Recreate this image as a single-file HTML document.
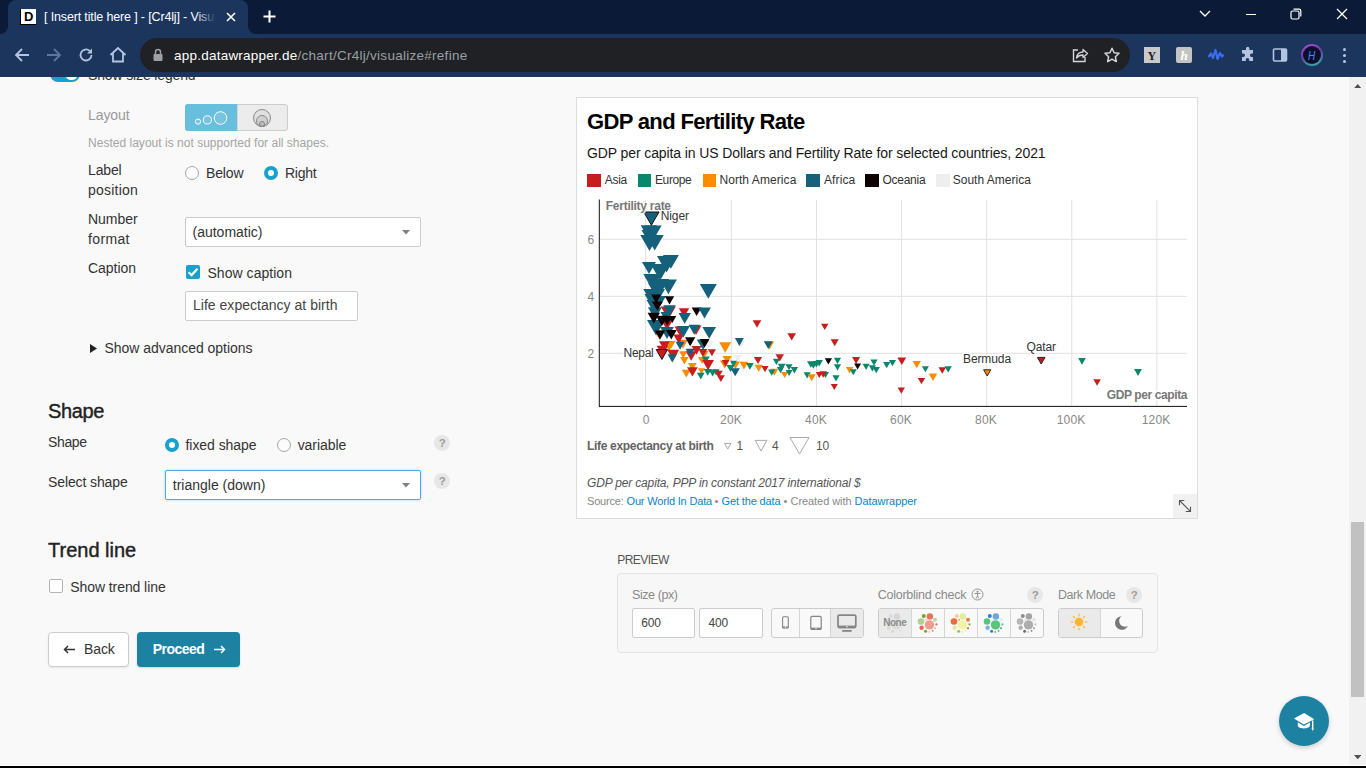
<!DOCTYPE html><html><head><meta charset='utf-8'><title>[ Insert title here ] - [Cr4lj] - Visualize</title><style>
*{box-sizing:border-box;margin:0;padding:0}
html,body{width:1366px;height:768px;overflow:hidden;background:#f9f9f9;font-family:"Liberation Sans",sans-serif;}
.t{position:absolute;white-space:nowrap;display:block}
.b{position:absolute;display:block}
#chrome{z-index:5;position:absolute;left:0;top:0;width:1366px;height:77px;background:#1b355d;overflow:hidden}
#tabbar{position:absolute;left:0;top:0;width:1366px;height:34px;background:#0b1a36}
#page{position:absolute;left:0;top:76px;width:1349px;height:689px;background:#f9f9f9;overflow:hidden}
#sb{position:absolute;left:1349px;top:76px;width:17px;height:689px;background:#f1f1f1}
#bot{position:absolute;left:0;top:765px;width:1366px;height:3px;background:#000;border-top:1px solid #fff}
.inp{position:absolute;background:#fff;border:1px solid #ccc;border-radius:2px}
.grp{position:absolute;border:1px solid #ccc;border-radius:3px;background:#f9f9f9;overflow:hidden}
.help{position:absolute;width:16px;height:16px;border-radius:50%;background:#e7e7e7}
</style></head><body><div id="chrome"><div id="tabbar"></div><div class="b" style="left:8px;top:0;width:240px;height:34px;background:#1b355d;border-radius:8px 8px 0 0"></div><div class="b" style="left:0;top:26px;width:8px;height:8px;background:#1b355d"></div><div class="b" style="left:-8px;top:18px;width:16px;height:16px;border-radius:50%;background:#0b1a36"></div><div class="b" style="left:248px;top:26px;width:8px;height:8px;background:#1b355d"></div><div class="b" style="left:248px;top:18px;width:16px;height:16px;border-radius:50%;background:#0b1a36"></div><div class="b" style="left:20px;top:9px;width:16px;height:16px;background:#fff;border-left:1px solid #000;border-bottom:1px solid #000"></div><span class="t" style="left:24.1px;top:9px;font-size:13px;line-height:15px;color:#000;font-weight:700;">D</span><span class="t" style="left:44.0px;top:10px;font-size:12.5px;line-height:14px;color:#fff;overflow:hidden;letter-spacing:-0.146px;">[ Insert title here ] - [Cr4lj] - Visu</span><div class="b" style="left:196px;top:6px;width:22px;height:22px;background:linear-gradient(90deg,rgba(28,52,89,0),#1b355d 90%)"></div><svg class="b" style="left:225px;top:11px" width="12" height="12" viewBox="0 0 12 12"><path d="M2 2L10 10M10 2L2 10" stroke="#fff" stroke-width="1.6"/></svg><svg class="b" style="left:262px;top:9px" width="15" height="15" viewBox="0 0 15 15"><path d="M7.5 1.5V13.5M1.5 7.5H13.5" stroke="#fff" stroke-width="2"/></svg><svg class="b" style="left:1198px;top:9px" width="14" height="10" viewBox="0 0 14 10"><path d="M2 2L7 7L12 2" stroke="#fff" stroke-width="1.4" fill="none"/></svg><div class="b" style="left:1246px;top:14px;width:10px;height:1px;background:#fff"></div><svg class="b" style="left:1290px;top:8px" width="12" height="12" viewBox="0 0 12 12"><rect x="1" y="3" width="8" height="8" rx="1.5" stroke="#fff" fill="none" stroke-width="1.2"/><path d="M3.5 1.2H9a1.8 1.8 0 0 1 1.8 1.8V8.5" stroke="#fff" fill="none" stroke-width="1.2"/></svg><svg class="b" style="left:1336px;top:8px" width="12" height="12" viewBox="0 0 12 12"><path d="M1 1L11 11M11 1L1 11" stroke="#fff" stroke-width="1.3"/></svg><svg class="b" style="left:13px;top:46px" width="18" height="18" viewBox="0 0 18 18"><path d="M16 9H3M9 3L3 9L9 15" stroke="#b4c3e0" stroke-width="1.8" fill="none"/></svg><svg class="b" style="left:45px;top:46px" width="18" height="18" viewBox="0 0 18 18"><path d="M2 9H15M9 3L15 9L9 15" stroke="#5f769d" stroke-width="1.8" fill="none"/></svg><svg class="b" style="left:77px;top:46px" width="18" height="18" viewBox="0 0 18 18"><path d="M14.5 9a5.5 5.5 0 1 1-1.8-4.1" stroke="#b4c3e0" stroke-width="1.8" fill="none"/><path d="M15 2.5V7.5H10z" fill="#b4c3e0"/></svg><svg class="b" style="left:108px;top:45px" width="20" height="20" viewBox="0 0 20 20"><path d="M2.5 10L10 3L17.5 10M5 8.5V16.5H15V8.5" stroke="#b4c3e0" stroke-width="1.8" fill="none"/></svg><div class="b" style="left:140px;top:38px;width:990px;height:34px;border-radius:17px;background:#202124"></div><svg class="b" style="left:152px;top:48px" width="12" height="14" viewBox="0 0 12 14"><rect x="1.5" y="6" width="9" height="7" rx="1" fill="#9aa0a6"/><path d="M3.5 6V4a2.5 2.5 0 0 1 5 0V6" stroke="#9aa0a6" stroke-width="1.5" fill="none"/></svg><span class="t" style="left:174.0px;top:48px;font-size:13.5px;line-height:15px;color:#fff;letter-spacing:0.230px;">app.datawrapper.de</span><span class="t" style="left:297.5px;top:48px;font-size:13.5px;line-height:15px;color:#9aa0a6;letter-spacing:0.273px;">/chart/Cr4lj/visualize#refine</span><svg class="b" style="left:1071px;top:46px" width="18" height="18" viewBox="0 0 18 18"><path d="M7 4H2.5V15.5H14V11" stroke="#d3d6dc" stroke-width="1.4" fill="none"/><path d="M5.5 12c.5-4 3-6 6.500-6V3.500l4.500 4L12 11.500V9c-3 0-5 1-6.500 3z" stroke="#d3d6dc" stroke-width="1.3" fill="none" stroke-linejoin="round"/></svg><svg class="b" style="left:1103px;top:46px" width="18" height="18" viewBox="0 0 18 18"><path d="M9 2.200l2.100 4.500 4.900.6-3.600 3.400.9 4.900L9 13.200 4.700 15.600l.9-4.900L2 7.300l4.900-.6z" stroke="#d3d6dc" stroke-width="1.5" fill="none" stroke-linejoin="round"/></svg><div class="b" style="left:1144px;top:47px;width:16px;height:16px;background:#c9c9c9"></div><span class="t" style="left:1147.5px;top:49px;font-size:12px;line-height:14px;color:#222;font-weight:700;font-family:'Liberation Serif',serif;">Y</span><div class="b" style="left:1176px;top:47px;width:16px;height:16px;background:#c4c4c4;border-radius:2px"></div><span class="t" style="left:1180.5px;top:48px;font-size:13px;line-height:15px;color:#fff;font-weight:700;font-style:italic;font-family:'Liberation Serif',serif;">h</span><svg class="b" style="left:1207px;top:46px" width="18" height="18" viewBox="0 0 18 18"><path d="M1.500 11L4 7.500L6 12L8.500 4L10.500 13L13 7L15 10.500L16.500 8.500" stroke="#3b6cf6" stroke-width="2.200" fill="none" stroke-linejoin="round"/></svg><svg class="b" style="left:1239px;top:46px" width="18" height="18" viewBox="0 0 18 18"><path d="M7 2.500a1.700 1.700 0 0 1 3.400 0V4H14V7.600h-1.300a1.700 1.700 0 0 0 0 3.400H14V15H10.200v-1.200a1.700 1.700 0 0 0-3.400 0V15H3V11h1.300a1.700 1.700 0 0 0 0-3.400H3V4h4z" fill="#b4c3e0"/></svg><svg class="b" style="left:1272px;top:47px" width="16" height="16" viewBox="0 0 16 16"><rect x="1.500" y="2" width="13" height="12" rx="1" stroke="#b4c3e0" stroke-width="1.600" fill="none"/><rect x="9" y="2" width="5.500" height="12" fill="#b4c3e0"/></svg><div class="b" style="left:1301px;top:44px;width:22px;height:22px;border-radius:50%;background:linear-gradient(160deg,#a04bd0 10%,#6a3fa8 45%,#2bb5a8 95%)"></div><div class="b" style="left:1303px;top:46px;width:18px;height:18px;border-radius:50%;background:#0b0f2b"></div><span class="t" style="left:1308.2px;top:49px;font-size:12.5px;line-height:14px;color:#3d8bff;font-style:italic;transform:scaleX(.8);transform-origin:0 0;">H</span><div class="b" style="left:1342.500px;top:47.500px;width:3.400px;height:3.400px;border-radius:50%;background:#b4c3e0;box-shadow:0 6px 0 #b4c3e0,0 12px 0 #b4c3e0"></div></div><div class="b" style="left:0;top:77px;width:1366px;height:1px;background:#fff"></div><div id="sb"><svg class="b" style="left:4.800px;top:7.700px" width="7.400" height="4.300" viewBox="0 0 7.400 4.300"><path d="M0 4.300L3.700 0L7.400 4.300z" fill="#505050"/></svg><div class="b" style="left:2px;top:446px;width:13px;height:175px;background:#c1c1c1"></div><svg class="b" style="left:4.800px;top:679px" width="7.400" height="4.300" viewBox="0 0 7.400 4.300"><path d="M0 0L3.700 4.300L7.400 0z" fill="#505050"/></svg></div><div id="bot"></div><div id="page" style="top:0;height:765px;background:transparent;"><div class="b" style="left:50px;top:66px;width:29.500px;height:16px;border-radius:8px;background:#18a1cd"></div><div class="b" style="left:65px;top:67.300px;width:13.300px;height:13px;border-radius:50%;background:#fff"></div><span class="t" style="left:88.0px;top:67px;font-size:14px;line-height:16px;color:#333;letter-spacing:-0.141px;">Show size legend</span><span class="t" style="left:88.0px;top:107px;font-size:14px;line-height:16px;color:#999;letter-spacing:-0.091px;">Layout</span><div class="b" style="left:185px;top:104px;width:103px;height:27px;border:1px solid #ccc;border-radius:3px;background:#ececec"></div><div class="b" style="left:185px;top:104px;width:51.500px;height:27px;border-radius:3px 0 0 3px;background:#68bedd"></div><div class="b" style="left:236.500px;top:105px;width:1px;height:25px;background:#d6d6d6"></div><svg class="b" style="left:192px;top:108px" width="38" height="20" viewBox="0 0 38 20"><circle cx="6" cy="13.600" r="2.600" stroke="#fff" fill="rgba(255,255,255,.1)" stroke-width="1"/><circle cx="15.400" cy="11.900" r="4.100" stroke="#fff" fill="rgba(255,255,255,.1)" stroke-width="1"/><circle cx="28.500" cy="10" r="6.300" stroke="#fff" fill="rgba(255,255,255,.1)" stroke-width="1"/></svg><svg class="b" style="left:251px;top:108px" width="22" height="22" viewBox="0 0 22 22"><circle cx="11" cy="10" r="8.500" stroke="#8a8a8a" fill="rgba(0,0,0,.05)" stroke-width="1"/><circle cx="11" cy="13" r="5.500" stroke="#8a8a8a" fill="rgba(0,0,0,.07)" stroke-width="1"/><circle cx="11" cy="16" r="2.600" stroke="#8a8a8a" fill="rgba(0,0,0,.1)" stroke-width="1"/></svg><span class="t" style="left:88.0px;top:136px;font-size:12px;line-height:14px;color:#a5a5a5;letter-spacing:0.019px;">Nested layout is not supported for all shapes.</span><span class="t" style="left:88.0px;top:162px;font-size:14px;line-height:16px;color:#333;letter-spacing:-0.153px;">Label</span><span class="t" style="left:88.0px;top:182px;font-size:14px;line-height:16px;color:#333;letter-spacing:0.217px;">position</span><div class="b" style="left:185px;top:166px;width:14px;height:14px;border-radius:50%;background:#fcfcfc;border:1px solid #a6a6a6"></div><span class="t" style="left:206.0px;top:165px;font-size:14px;line-height:16px;color:#333;letter-spacing:-0.128px;">Below</span><div class="b" style="left:264px;top:166px;width:14px;height:14px;border-radius:50%;background:#fff;border:4px solid #18a1cd"></div><span class="t" style="left:285.0px;top:165px;font-size:14px;line-height:16px;color:#333;letter-spacing:-0.237px;">Right</span><span class="t" style="left:88.0px;top:211px;font-size:14px;line-height:16px;color:#333;letter-spacing:-0.049px;">Number</span><span class="t" style="left:88.0px;top:231px;font-size:14px;line-height:16px;color:#333;letter-spacing:0.352px;">format</span><div class="inp" style="left:185px;top:217px;width:236px;height:30px"></div><span class="t" style="left:192.5px;top:224px;font-size:14px;line-height:16px;color:#333;letter-spacing:-0.003px;">(automatic)</span><svg class="b" style="left:402px;top:229.600px" width="8" height="5" viewBox="0 0 8 5"><path d="M0 0L4 4.500L8 0z" fill="#808080"/></svg><span class="t" style="left:88.0px;top:260px;font-size:14px;line-height:16px;color:#333;letter-spacing:-0.038px;">Caption</span><div class="b" style="left:186px;top:265px;width:14px;height:14px;border-radius:2px;background:#18a1cd"></div><svg class="b" style="left:186px;top:265px" width="14" height="14" viewBox="0 0 14 14"><path d="M2.600 7.200L5.600 10.100L11.500 3.800" stroke="#fff" stroke-width="2.200" fill="none"/></svg><span class="t" style="left:207.5px;top:265px;font-size:14px;line-height:16px;color:#333;letter-spacing:0.036px;">Show caption</span><div class="inp" style="left:185px;top:291px;width:173px;height:30px"></div><span class="t" style="left:193.0px;top:297px;font-size:14px;line-height:16px;color:#444;letter-spacing:0.021px;">Life expectancy at birth</span><svg class="b" style="left:90px;top:343.500px" width="7" height="9" viewBox="0 0 7 9"><path d="M0 0L7 4.500L0 9z" fill="#222"/></svg><span class="t" style="left:104.5px;top:340px;font-size:14px;line-height:16px;color:#333;letter-spacing:-0.032px;">Show advanced options</span><span class="t" style="left:48.0px;top:400px;font-size:20px;line-height:22px;color:#222;-webkit-text-stroke:0.4px #222;letter-spacing:-0.369px;">Shape</span><span class="t" style="left:48.0px;top:434px;font-size:14px;line-height:16px;color:#333;letter-spacing:-0.357px;">Shape</span><div class="b" style="left:165px;top:438px;width:14px;height:14px;border-radius:50%;background:#fff;border:4px solid #18a1cd"></div><span class="t" style="left:185.5px;top:437px;font-size:14px;line-height:16px;color:#333;letter-spacing:-0.055px;">fixed shape</span><div class="b" style="left:277px;top:438px;width:14px;height:14px;border-radius:50%;background:#fcfcfc;border:1px solid #a6a6a6"></div><span class="t" style="left:297.7px;top:437px;font-size:14px;line-height:16px;color:#333;letter-spacing:-0.066px;">variable</span><div class="help" style="left:434px;top:435px"></div><span class="t" style="left:438.7px;top:437px;font-size:11.5px;line-height:12px;color:#9c9c9c;font-weight:700;">?</span><div class="help" style="left:434px;top:473px"></div><span class="t" style="left:438.7px;top:475px;font-size:11.5px;line-height:12px;color:#9c9c9c;font-weight:700;">?</span><span class="t" style="left:48.0px;top:474px;font-size:14px;line-height:16px;color:#333;letter-spacing:-0.113px;">Select shape</span><div class="inp" style="left:165px;top:470px;width:256px;height:30px;border-color:#52a8ec;box-shadow:0 0 3px rgba(82,168,236,.4)"></div><span class="t" style="left:172.8px;top:477px;font-size:14px;line-height:16px;color:#333;">triangle (down)</span><svg class="b" style="left:402px;top:482.600px" width="8" height="5" viewBox="0 0 8 5"><path d="M0 0L4 4.500L8 0z" fill="#808080"/></svg><span class="t" style="left:48.0px;top:539px;font-size:20px;line-height:22px;color:#222;-webkit-text-stroke:0.4px #222;">Trend line</span><div class="b" style="left:49px;top:579px;width:14px;height:14px;border-radius:2px;background:#fff;border:1px solid #b3b3b3"></div><span class="t" style="left:70.3px;top:579px;font-size:14px;line-height:16px;color:#333;letter-spacing:-0.081px;">Show trend line</span><div class="b" style="left:48px;top:632px;width:81px;height:35px;border-radius:4px;background:#fff;border:1px solid #ccc;box-shadow:0 1px 2px rgba(0,0,0,.08)"></div><svg class="b" style="left:62.500px;top:644px" width="13" height="11" viewBox="0 0 13 11"><path d="M12 5.500H1.500M5 2L1.500 5.500L5 9" stroke="#333" stroke-width="1.500" fill="none"/></svg><span class="t" style="left:84.0px;top:641px;font-size:14px;line-height:16px;color:#333;letter-spacing:-0.106px;">Back</span><div class="b" style="left:137px;top:632px;width:103px;height:35px;border-radius:4px;background:#1d81a2;box-shadow:0 1px 2px rgba(0,0,0,.15)"></div><span class="t" style="left:152.7px;top:641px;font-size:14px;line-height:16px;color:#fff;font-weight:700;letter-spacing:-0.521px;">Proceed</span><svg class="b" style="left:213px;top:644px" width="13" height="11" viewBox="0 0 13 11"><path d="M1 5.500H11.500M8 2L11.500 5.500L8 9" stroke="#fff" stroke-width="1.500" fill="none"/></svg><div class="b" style="left:576px;top:97px;width:622px;height:422px;background:#fff;border:1px solid #ddd"></div><span class="t" style="left:587.0px;top:109px;font-size:22px;line-height:25px;color:#000;font-weight:700;letter-spacing:-0.653px;">GDP and Fertility Rate</span><span class="t" style="left:587.0px;top:145px;font-size:14px;line-height:16px;color:#181818;letter-spacing:-0.107px;">GDP per capita in US Dollars and Fertility Rate for selected countries, 2021</span><div class="b" style="left:587px;top:173.800px;width:13.700px;height:13.700px;background:#c71e1d"></div><span class="t" style="left:604.8px;top:173px;font-size:12px;line-height:14px;color:#333;letter-spacing:-0.286px;">Asia</span><div class="b" style="left:637.5px;top:173.800px;width:13.700px;height:13.700px;background:#09876d"></div><span class="t" style="left:655.0px;top:173px;font-size:12px;line-height:14px;color:#333;letter-spacing:-0.401px;">Europe</span><div class="b" style="left:702.5px;top:173.800px;width:13.700px;height:13.700px;background:#fa8c00"></div><span class="t" style="left:719.4px;top:173px;font-size:12px;line-height:14px;color:#333;letter-spacing:0.075px;">North America</span><div class="b" style="left:806px;top:173.800px;width:13.700px;height:13.700px;background:#15607a"></div><span class="t" style="left:824.0px;top:173px;font-size:12px;line-height:14px;color:#333;letter-spacing:0.102px;">Africa</span><div class="b" style="left:865px;top:173.800px;width:13.700px;height:13.700px;background:#0d0000"></div><span class="t" style="left:882.4px;top:173px;font-size:12px;line-height:14px;color:#333;letter-spacing:-0.243px;">Oceania</span><div class="b" style="left:936px;top:173.800px;width:13.700px;height:13.700px;background:#eeeeee"></div><span class="t" style="left:952.7px;top:173px;font-size:12px;line-height:14px;color:#333;letter-spacing:0.019px;">South America</span><svg class="b" style="left:576px;top:190px" width="622" height="240" viewBox="576 190 622 240"><rect x="645.00" y="200" width="1" height="206" fill="#e2e2e2"/><rect x="730.85" y="200" width="1" height="206" fill="#e2e2e2"/><rect x="815.95" y="200" width="1" height="206" fill="#e2e2e2"/><rect x="901.05" y="200" width="1" height="206" fill="#e2e2e2"/><rect x="986.15" y="200" width="1" height="206" fill="#e2e2e2"/><rect x="1071.25" y="200" width="1" height="206" fill="#e2e2e2"/><rect x="1156.35" y="200" width="1" height="206" fill="#e2e2e2"/><rect x="600" y="238.80" width="587" height="1" fill="#e2e2e2"/><rect x="600" y="295.85" width="587" height="1" fill="#e2e2e2"/><rect x="600" y="352.80" width="587" height="1" fill="#e2e2e2"/><path d="M704.5 341.0H713.5L709.0 348.8z" fill="#eeeeee"/><path d="M736.5 340.0H745.5L741.0 347.8z" fill="#eeeeee"/><path d="M733.6 355.0H741.8L737.7 362.1z" fill="#eeeeee"/><path d="M738.8 364.5H747.2L743.0 371.9z" fill="#eeeeee"/><path d="M751.0 365.0H758.0L754.5 371.1z" fill="#eeeeee"/><path d="M653.8 330.0H665.2L659.5 340.0z" fill="#fa8c00"/><path d="M666.5 341.0H675.5L671.0 348.8z" fill="#fa8c00"/><path d="M664.5 343.5H673.5L669.0 351.3z" fill="#fa8c00"/><path d="M678.0 339.7H688.0L683.0 348.4z" fill="#fa8c00"/><path d="M679.2 351.3H687.2L683.2 358.2z" fill="#fa8c00"/><path d="M680.1 357.1H688.6L684.4 364.5z" fill="#fa8c00"/><path d="M687.9 363.0H696.7L692.3 370.6z" fill="#fa8c00"/><path d="M681.8 369.8H690.8L686.3 377.6z" fill="#fa8c00"/><path d="M719.2 342.3H731.2L725.2 352.7z" fill="#fa8c00"/><path d="M699.5 351.0H708.5L704.0 358.8z" fill="#fa8c00"/><path d="M698.0 357.0H706.0L702.0 363.9z" fill="#fa8c00"/><path d="M722.5 356.0H731.7L727.1 364.0z" fill="#fa8c00"/><path d="M720.0 360.4H729.5L724.8 368.6z" fill="#fa8c00"/><path d="M739.6 361.7H748.4L744.0 369.3z" fill="#fa8c00"/><path d="M730.9 361.4H739.9L735.4 369.2z" fill="#fa8c00"/><path d="M697.9 368.2H705.1L701.5 374.4z" fill="#fa8c00"/><path d="M764.9 341.5H774.1L769.5 349.5z" fill="#fa8c00"/><path d="M754.6 364.7H762.8L758.7 371.8z" fill="#fa8c00"/><path d="M770.3 368.8H778.3L774.3 375.7z" fill="#fa8c00"/><path d="M781.1 372.0H788.1L784.6 378.1z" fill="#fa8c00"/><path d="M845.9 367.1H853.4L849.6 373.6z" fill="#fa8c00"/><path d="M912.7 361.1H920.9L916.8 368.2z" fill="#fa8c00"/><path d="M928.8 373.6H937.2L933.0 380.9z" fill="#fa8c00"/><path d="M701.8 356.5H709.8L705.8 363.4z" fill="#09876d"/><path d="M730.0 360.7H737.0L733.5 366.8z" fill="#09876d"/><path d="M746.0 363.1H753.8L749.9 369.8z" fill="#09876d"/><path d="M696.9 372.8H704.6L700.8 379.5z" fill="#09876d"/><path d="M703.8 368.9H711.7L707.7 375.7z" fill="#09876d"/><path d="M708.6 369.5H716.6L712.6 376.4z" fill="#09876d"/><path d="M712.7 369.3H719.7L716.2 375.4z" fill="#09876d"/><path d="M726.4 365.0H734.6L730.5 372.1z" fill="#09876d"/><path d="M772.8 358.8H780.0L776.4 365.1z" fill="#09876d"/><path d="M768.1 369.5H775.4L771.7 375.8z" fill="#09876d"/><path d="M777.8 363.8H785.6L781.7 370.6z" fill="#09876d"/><path d="M776.9 367.0H784.1L780.5 373.3z" fill="#09876d"/><path d="M785.5 364.2H792.5L789.0 370.3z" fill="#09876d"/><path d="M790.6 367.0H798.1L794.4 373.5z" fill="#09876d"/><path d="M785.6 370.0H792.6L789.1 376.1z" fill="#09876d"/><path d="M807.0 361.3H814.5L810.8 367.8z" fill="#09876d"/><path d="M809.6 362.2H817.1L813.4 368.7z" fill="#09876d"/><path d="M812.6 361.0H820.1L816.4 367.5z" fill="#09876d"/><path d="M815.5 360.1H822.9L819.2 366.5z" fill="#09876d"/><path d="M803.6 372.2H810.8L807.2 378.4z" fill="#09876d"/><path d="M822.0 372.0H829.0L825.5 378.1z" fill="#09876d"/><path d="M833.9 357.7H841.1L837.5 364.0z" fill="#09876d"/><path d="M833.9 364.3H841.1L837.5 370.6z" fill="#09876d"/><path d="M832.4 375.2H839.6L836.0 381.5z" fill="#09876d"/><path d="M849.8 369.2H856.8L853.3 375.3z" fill="#09876d"/><path d="M862.6 363.8H869.6L866.1 369.9z" fill="#09876d"/><path d="M870.4 359.4H877.6L874.0 365.7z" fill="#09876d"/><path d="M868.8 365.3H876.0L872.4 371.6z" fill="#09876d"/><path d="M872.6 366.9H879.9L876.2 373.2z" fill="#09876d"/><path d="M883.1 362.0H890.4L886.7 368.3z" fill="#09876d"/><path d="M888.9 359.9H896.1L892.5 366.2z" fill="#09876d"/><path d="M921.9 366.2H928.9L925.4 372.3z" fill="#09876d"/><path d="M944.5 366.2H951.9L948.2 372.6z" fill="#09876d"/><path d="M1078.2 358.1H1085.8L1082.0 364.7z" fill="#09876d"/><path d="M1134.1 369.1H1141.9L1138.0 375.9z" fill="#09876d"/><path d="M678.8 308.2H689.2L684.0 317.3z" fill="#c71e1d"/><path d="M660.8 306.5H675.8L668.3 319.5z" fill="#c71e1d"/><path d="M660.5 319.0H673.5L667.0 330.3z" fill="#c71e1d"/><path d="M674.5 326.5H687.5L681.0 337.8z" fill="#c71e1d"/><path d="M673.4 334.5H684.1L678.7 343.8z" fill="#c71e1d"/><path d="M690.5 325.5H701.5L696.0 335.0z" fill="#c71e1d"/><path d="M659.0 341.2H669.8L664.4 350.5z" fill="#c71e1d"/><path d="M656.6 345.7H668.1L662.4 355.7z" fill="#c71e1d"/><path d="M667.2 349.7H679.2L673.2 360.1z" fill="#c71e1d"/><path d="M691.5 346.1H701.5L696.5 354.8z" fill="#c71e1d"/><path d="M698.5 348.9H707.5L703.0 356.7z" fill="#c71e1d"/><path d="M685.7 351.2H696.7L691.2 360.7z" fill="#c71e1d"/><path d="M687.0 367.2H697.8L692.4 376.5z" fill="#c71e1d"/><path d="M702.2 360.1H714.0L708.1 370.3z" fill="#c71e1d"/><path d="M714.8 370.7H722.7L718.7 377.5z" fill="#c71e1d"/><path d="M717.0 375.3H724.8L720.9 382.0z" fill="#c71e1d"/><path d="M752.7 320.3H761.3L757.0 327.7z" fill="#c71e1d"/><path d="M707.9 349.2H715.9L711.9 356.2z" fill="#c71e1d"/><path d="M721.8 360.1H729.2L725.5 366.6z" fill="#c71e1d"/><path d="M753.9 356.9H762.1L758.0 364.1z" fill="#c71e1d"/><path d="M787.4 333.2H796.0L791.7 340.6z" fill="#c71e1d"/><path d="M821.1 323.8H828.4L824.8 330.1z" fill="#c71e1d"/><path d="M830.7 339.3H838.7L834.7 346.2z" fill="#c71e1d"/><path d="M775.5 354.2H784.0L779.8 361.6z" fill="#c71e1d"/><path d="M761.4 366.0H768.6L765.0 372.3z" fill="#c71e1d"/><path d="M815.8 372.0H822.8L819.3 378.1z" fill="#c71e1d"/><path d="M819.5 371.3H827.0L823.2 377.8z" fill="#c71e1d"/><path d="M830.8 384.0H837.8L834.3 390.1z" fill="#c71e1d"/><path d="M852.1 357.0H860.1L856.1 363.9z" fill="#c71e1d"/><path d="M897.4 357.5H906.2L901.8 365.1z" fill="#c71e1d"/><path d="M897.6 387.5H904.9L901.3 393.8z" fill="#c71e1d"/><path d="M917.8 377.9H925.2L921.5 384.3z" fill="#c71e1d"/><path d="M938.5 367.2H946.1L942.3 373.8z" fill="#c71e1d"/><path d="M1093.3 379.2H1100.9L1097.1 385.8z" fill="#c71e1d"/><path d="M691.7 307.5H701.5L696.6 316.0z" fill="#0d0000"/><path d="M640.7 225.2H656.7L648.7 239.1z" fill="#15607a"/><path d="M645.6 225.5H661.6L653.6 239.4z" fill="#15607a"/><path d="M641.5 230.0H657.5L649.5 243.9z" fill="#15607a"/><path d="M640.3 235.0H658.7L649.5 250.9z" fill="#15607a"/><path d="M645.7 235.0H663.7L654.7 250.6z" fill="#15607a"/><path d="M662.9 254.9H678.9L670.9 268.8z" fill="#15607a"/><path d="M657.0 255.9H676.0L666.5 272.4z" fill="#15607a"/><path d="M642.0 262.0H656.0L649.0 274.1z" fill="#15607a"/><path d="M650.6 264.0H669.6L660.1 280.5z" fill="#15607a"/><path d="M643.3 274.1H661.3L652.3 289.7z" fill="#15607a"/><path d="M648.0 283.0H662.0L655.0 295.1z" fill="#15607a"/><path d="M660.5 312.0H672.0L666.3 322.0z" fill="#15607a"/><path d="M659.9 279.6H676.9L668.4 294.3z" fill="#15607a"/><path d="M651.5 279.0H669.1L660.3 294.2z" fill="#15607a"/><path d="M643.3 289.0H657.3L650.3 301.1z" fill="#15607a"/><path d="M644.5 294.0H660.5L652.5 307.9z" fill="#15607a"/><path d="M646.5 300.0H660.5L653.5 312.1z" fill="#15607a"/><path d="M647.9 307.3H661.9L654.9 319.4z" fill="#15607a"/><path d="M649.0 289.0H665.0L657.0 302.9z" fill="#15607a"/><path d="M654.0 296.0H666.0L660.0 306.4z" fill="#15607a"/><path d="M647.0 320.0H665.0L656.0 335.6z" fill="#15607a"/><path d="M663.3 305.3H675.7L669.5 316.0z" fill="#15607a"/><path d="M678.5 313.1H690.9L684.7 323.8z" fill="#15607a"/><path d="M676.9 326.1H689.9L683.4 337.4z" fill="#15607a"/><path d="M688.5 324.8H700.0L694.2 334.8z" fill="#15607a"/><path d="M660.1 327.0H673.9L667.0 338.9z" fill="#15607a"/><path d="M702.4 327.0H716.0L709.2 338.8z" fill="#15607a"/><path d="M699.8 284.0H716.8L708.3 298.7z" fill="#15607a"/><path d="M698.1 307.4H710.9L704.5 318.5z" fill="#15607a"/><path d="M696.8 339.4H709.2L703.0 350.1z" fill="#15607a"/><path d="M675.6 341.8H684.6L680.1 349.7z" fill="#15607a"/><path d="M667.5 354.2H677.0L672.3 362.4z" fill="#15607a"/><path d="M685.7 348.7H694.7L690.2 356.5z" fill="#15607a"/><path d="M734.9 338.1H743.9L739.4 345.9z" fill="#15607a"/><path d="M730.5 368.2H739.9L735.2 376.3z" fill="#15607a"/><path d="M763.8 341.3H772.8L768.3 349.1z" fill="#15607a"/><path d="M651.2 294.6H661.2L656.2 303.3z" fill="#0d0000"/><path d="M664.8 296.2H674.2L669.5 304.4z" fill="#0d0000"/><path d="M652.0 301.4H662.8L657.4 310.8z" fill="#0d0000"/><path d="M647.6 312.8H660.0L653.8 323.5z" fill="#0d0000"/><path d="M655.9 315.7H667.9L661.9 326.1z" fill="#0d0000"/><path d="M661.6 315.9H672.6L667.1 325.4z" fill="#0d0000"/><path d="M668.3 316.0H676.3L672.3 322.9z" fill="#0d0000"/><path d="M654.8 330.4H665.2L660.0 339.4z" fill="#0d0000"/><path d="M665.9 330.0H676.7L671.3 339.4z" fill="#0d0000"/><path d="M685.0 337.3H695.4L690.2 346.3z" fill="#0d0000"/><path d="M699.7 339.1H709.5L704.6 347.6z" fill="#0d0000"/><path d="M824.8 358.3H832.0L828.4 364.6z" fill="#0d0000"/><path d="M854.1 363.5H861.1L857.6 369.6z" fill="#0d0000"/><path d="M807.7 374.3H815.7L811.7 381.2z" fill="#fa8c00"/><path d="M643.8 212.0H659.0L651.4 225.2z" fill="#15607a" stroke="#111" stroke-width="1"/><path d="M656.2 349.6H667.5L661.9 359.4z" fill="#c71e1d" stroke="#111" stroke-width="1"/><path d="M983.6 369.8H990.8L987.2 376.0z" fill="#fa8c00" stroke="#222" stroke-width="1"/><path d="M1037.4 357.4H1045.0L1041.2 364.0z" fill="#c71e1d" stroke="#222" stroke-width="1"/><rect x="598.800" y="199.500" width="1" height="207.400" fill="#111"/><rect x="599" y="405.900" width="588" height="1" fill="#111"/></svg><span class="t" style="left:605.8px;top:199px;font-size:12px;line-height:14px;color:#777;font-weight:700;text-shadow:-1px -1px 0 #fff,1px -1px 0 #fff,-1px 1px 0 #fff,1px 1px 0 #fff,0 1px 0 #fff,0 -1px 0 #fff,1px 0 0 #fff,-1px 0 0 #fff;letter-spacing:-0.265px;">Fertility rate</span><span class="t" style="left:1106.8px;top:388px;font-size:12px;line-height:14px;color:#777;font-weight:700;text-shadow:-1px -1px 0 #fff,1px -1px 0 #fff,-1px 1px 0 #fff,1px 1px 0 #fff,0 1px 0 #fff,0 -1px 0 #fff,1px 0 0 #fff,-1px 0 0 #fff;letter-spacing:-0.401px;">GDP per capita</span><span class="t" style="left:587.6px;top:233px;font-size:12px;line-height:14px;color:#888;">6</span><span class="t" style="left:587.6px;top:290px;font-size:12px;line-height:14px;color:#888;">4</span><span class="t" style="left:587.6px;top:347px;font-size:12px;line-height:14px;color:#888;">2</span><span class="t" style="left:642.8px;top:413px;font-size:12px;line-height:14px;color:#888;letter-spacing:-0.188px;">0</span><span class="t" style="left:720.0px;top:413px;font-size:12px;line-height:14px;color:#888;letter-spacing:0.214px;">20K</span><span class="t" style="left:805.0px;top:413px;font-size:12px;line-height:14px;color:#888;letter-spacing:0.214px;">40K</span><span class="t" style="left:890.0px;top:413px;font-size:12px;line-height:14px;color:#888;letter-spacing:0.214px;">60K</span><span class="t" style="left:975.0px;top:413px;font-size:12px;line-height:14px;color:#888;letter-spacing:0.214px;">80K</span><span class="t" style="left:1056.8px;top:413px;font-size:12px;line-height:14px;color:#888;letter-spacing:0.117px;">100K</span><span class="t" style="left:1141.8px;top:413px;font-size:12px;line-height:14px;color:#888;letter-spacing:0.117px;">120K</span><span class="t" style="left:660.7px;top:209px;font-size:12px;line-height:14px;color:#333;text-shadow:-1px -1px 0 #fff,1px -1px 0 #fff,-1px 1px 0 #fff,1px 1px 0 #fff,0 1px 0 #fff,0 -1px 0 #fff,1px 0 0 #fff,-1px 0 0 #fff;letter-spacing:-0.098px;">Niger</span><span class="t" style="left:623.5px;top:346px;font-size:12px;line-height:14px;color:#333;text-shadow:-1px -1px 0 #fff,1px -1px 0 #fff,-1px 1px 0 #fff,1px 1px 0 #fff,0 1px 0 #fff,0 -1px 0 #fff,1px 0 0 #fff,-1px 0 0 #fff;letter-spacing:-0.272px;">Nepal</span><span class="t" style="left:963.0px;top:352px;font-size:12px;line-height:14px;color:#333;text-shadow:-1px -1px 0 #fff,1px -1px 0 #fff,-1px 1px 0 #fff,1px 1px 0 #fff,0 1px 0 #fff,0 -1px 0 #fff,1px 0 0 #fff,-1px 0 0 #fff;letter-spacing:-0.100px;">Bermuda</span><span class="t" style="left:1026.5px;top:340px;font-size:12px;line-height:14px;color:#333;text-shadow:-1px -1px 0 #fff,1px -1px 0 #fff,-1px 1px 0 #fff,1px 1px 0 #fff,0 1px 0 #fff,0 -1px 0 #fff,1px 0 0 #fff,-1px 0 0 #fff;letter-spacing:-0.103px;">Qatar</span><span class="t" style="left:587.0px;top:439px;font-size:12px;line-height:14px;color:#636363;font-weight:700;letter-spacing:-0.314px;">Life expectancy at birth</span><svg class="b" style="left:720px;top:435px" width="100" height="24" viewBox="0 0 100 24"><path d="M4.500 8.500H11L7.750 14z" stroke="#aaa" fill="none" stroke-width="1"/><path d="M35.200 5.400H46.900L41.050 16z" stroke="#aaa" fill="none" stroke-width="1"/><path d="M70 2.500H89L79.500 19z" stroke="#aaa" fill="none" stroke-width="1"/></svg><span class="t" style="left:736.5px;top:439px;font-size:12px;line-height:14px;color:#555;">1</span><span class="t" style="left:772.0px;top:439px;font-size:12px;line-height:14px;color:#555;">4</span><span class="t" style="left:816.0px;top:439px;font-size:12px;line-height:14px;color:#555;letter-spacing:-0.180px;">10</span><span class="t" style="left:587.0px;top:476px;font-size:12px;line-height:14px;color:#555;font-style:italic;letter-spacing:-0.163px;">GDP per capita, PPP in constant 2017 international $</span><span class="t" style="left:587.0px;top:495px;font-size:11px;line-height:12px;color:#888;letter-spacing:-0.203px;">Source:</span><span class="t" style="left:626.5px;top:495px;font-size:11px;line-height:12px;color:#0088cc;letter-spacing:-0.174px;">Our World In Data</span><span class="t" style="left:714.5px;top:495px;font-size:11px;line-height:12px;color:#888;">&bull;</span><span class="t" style="left:721.5px;top:495px;font-size:11px;line-height:12px;color:#0088cc;letter-spacing:-0.129px;">Get the data</span><span class="t" style="left:783.5px;top:495px;font-size:11px;line-height:12px;color:#888;">&bull;</span><span class="t" style="left:790.5px;top:495px;font-size:11px;line-height:12px;color:#888;letter-spacing:-0.064px;">Created with</span><span class="t" style="left:854.5px;top:495px;font-size:11px;line-height:12px;color:#0088cc;letter-spacing:-0.044px;">Datawrapper</span><div class="b" style="left:1173px;top:494px;width:24px;height:24px;background:#f1f1f1"></div><svg class="b" style="left:1177px;top:498px" width="16" height="16" viewBox="0 0 16 16"><path d="M2.500 2.500L13.500 13.500M2.500 7.300V2.500H7.300M13.500 8.700V13.500H8.700" stroke="#555" stroke-width="1.100" fill="none"/></svg><span class="t" style="left:617.3px;top:553px;font-size:12px;line-height:14px;color:#555;letter-spacing:-0.549px;">PREVIEW</span><div class="b" style="left:617px;top:573px;width:541px;height:80px;border:1px solid #e3e3e3;border-radius:4px;background:#f7f7f7"></div><span class="t" style="left:632.0px;top:588px;font-size:12.5px;line-height:14px;color:#8a8a8a;letter-spacing:-0.414px;">Size (px)</span><div class="inp" style="left:632px;top:608px;width:63px;height:30px"></div><span class="t" style="left:641.2px;top:616px;font-size:12px;line-height:14px;color:#444;letter-spacing:-0.144px;">600</span><div class="inp" style="left:699px;top:608px;width:64px;height:30px"></div><span class="t" style="left:708.4px;top:616px;font-size:12px;line-height:14px;color:#444;letter-spacing:-0.144px;">400</span><div class="grp" style="left:771px;top:608px;width:93px;height:30px"></div><div class="b" style="left:830.500px;top:609px;width:32.500px;height:28px;background:#eaeaea;border-radius:0 2px 2px 0"></div><div class="b" style="left:799px;top:609px;width:1px;height:28px;background:#d5d5d5"></div><div class="b" style="left:830px;top:609px;width:1px;height:28px;background:#d5d5d5"></div><svg class="b" style="left:772px;top:609px" width="91" height="28" viewBox="772 609 91 28"><g fill="none" stroke="#858585"><rect x="782.600" y="616.700" width="5.700" height="11.300" rx="1" stroke-width="1.100"/><rect x="810.800" y="616.400" width="10.400" height="12.900" rx="1" stroke-width="1.200"/><rect x="838" y="615.100" width="17.800" height="12.500" rx="1.500" stroke-width="1.700"/></g><g fill="#858585"><rect x="782.600" y="626.500" width="5.700" height="1.700"/><rect x="810.800" y="627.600" width="10.400" height="1.900"/><rect x="838" y="625.600" width="17.800" height="2.300"/><rect x="842.200" y="630" width="9.500" height="1.800"/></g><rect x="784.900" y="626.900" width="1.100" height="0.900" fill="#f9f9f9"/><rect x="815.300" y="628" width="1.400" height="0.900" fill="#f9f9f9"/><rect x="846.200" y="626.100" width="1.500" height="1.300" fill="#ddd"/></svg><span class="t" style="left:877.7px;top:588px;font-size:12.5px;line-height:14px;color:#8a8a8a;letter-spacing:-0.245px;">Colorblind check</span><svg class="b" style="left:970.500px;top:588px" width="13" height="13" viewBox="0 0 13 13"><circle cx="6.500" cy="6.500" r="5.500" stroke="#8a8a8a" fill="none" stroke-width="0.900"/><circle cx="6.500" cy="3.800" r="1" fill="#8a8a8a"/><path d="M3.500 5.500H9.500M6.500 5.500V8L5 10.500M6.500 8L8 10.500" stroke="#8a8a8a" stroke-width="0.900" fill="none"/></svg><div class="help" style="left:1027px;top:586.8px"></div><span class="t" style="left:1031.7px;top:589px;font-size:11.5px;line-height:12px;color:#9c9c9c;font-weight:700;">?</span><div class="help" style="left:1126px;top:586.8px"></div><span class="t" style="left:1130.7px;top:589px;font-size:11.5px;line-height:12px;color:#9c9c9c;font-weight:700;">?</span><div class="grp" style="left:878px;top:608px;width:166px;height:30px"></div><div class="b" style="left:879px;top:609px;width:32.500px;height:28px;background:#eaeaea;border-radius:2px 0 0 2px"></div><div class="b" style="left:911.0px;top:609px;width:1px;height:28px;background:#d5d5d5"></div><div class="b" style="left:944.0px;top:609px;width:1px;height:28px;background:#d5d5d5"></div><div class="b" style="left:977.0px;top:609px;width:1px;height:28px;background:#d5d5d5"></div><div class="b" style="left:1010.0px;top:609px;width:1px;height:28px;background:#d5d5d5"></div><svg class="b" style="left:881px;top:610px" width="28" height="26" viewBox="-14 -13 28 26"><circle cx="1.500" cy="1.900" r="4.700" fill="#dcdcdc"/><circle cx="-7" cy="-1.5" r="3.3" fill="#dedede"/><circle cx="1.9" cy="-6.6" r="3.2" fill="#d6d6d6"/><circle cx="-4.2" cy="-6.9" r="2" fill="#dadada"/><circle cx="7" cy="-3.2" r="2" fill="#e6e6e6"/><circle cx="-6.4" cy="4.8" r="2.2" fill="#dcdcdc"/><circle cx="8.4" cy="1.4" r="1.1" fill="#e0e0e0"/><circle cx="-2.4" cy="8.3" r="1.5" fill="#d8d8d8"/><circle cx="1.3" cy="9" r="0.9" fill="#e2e2e2"/><circle cx="4.6" cy="7.8" r="0.9" fill="#dcdcdc"/><circle cx="7" cy="5.2" r="1" fill="#e0e0e0"/><circle cx="-1.9" cy="-3.2" r="1" fill="#e8e8e8"/></svg><span class="t" style="left:883.2px;top:617px;font-size:10px;line-height:11px;color:#8a8a8a;font-weight:700;text-shadow:0 0 1px #eee;letter-spacing:-0.500px;">None</span><svg class="b" style="left:914px;top:610px" width="28" height="26" viewBox="-14 -13 28 26"><circle cx="1.500" cy="1.900" r="4.700" fill="#ee9e8c"/><circle cx="-7" cy="-1.5" r="3.3" fill="#b3cf94"/><circle cx="1.9" cy="-6.6" r="3.2" fill="#e8735a"/><circle cx="-4.2" cy="-6.9" r="2" fill="#6fa53c"/><circle cx="7" cy="-3.2" r="2" fill="#b9d49e"/><circle cx="-6.4" cy="4.8" r="2.2" fill="#e36a4e"/><circle cx="8.4" cy="1.4" r="1.1" fill="#e36a4e"/><circle cx="-2.4" cy="8.3" r="1.5" fill="#6fa53c"/><circle cx="1.3" cy="9" r="0.9" fill="#f3c6bb"/><circle cx="4.6" cy="7.8" r="0.9" fill="#e36a4e"/><circle cx="7" cy="5.2" r="1" fill="#b9d49e"/><circle cx="-1.9" cy="-3.2" r="1" fill="#f3c6bb"/></svg><svg class="b" style="left:947px;top:610px" width="28" height="26" viewBox="-14 -13 28 26"><circle cx="1.500" cy="1.900" r="4.700" fill="#f3f3a8"/><circle cx="-7" cy="-1.5" r="3.3" fill="#ea6d3b"/><circle cx="1.9" cy="-6.6" r="3.2" fill="#e1eb9b"/><circle cx="-4.2" cy="-6.9" r="2" fill="#f7d08a"/><circle cx="7" cy="-3.2" r="2" fill="#ea7a4a"/><circle cx="-6.4" cy="4.8" r="2.2" fill="#e1eb9b"/><circle cx="8.4" cy="1.4" r="1.1" fill="#8db33a"/><circle cx="-2.4" cy="8.3" r="1.5" fill="#a5c04a"/><circle cx="1.3" cy="9" r="0.9" fill="#f7ea8a"/><circle cx="4.6" cy="7.8" r="0.9" fill="#f7ea8a"/><circle cx="7" cy="5.2" r="1" fill="#e0502a"/><circle cx="-1.9" cy="-3.2" r="1" fill="#f0a070"/></svg><svg class="b" style="left:980px;top:610px" width="28" height="26" viewBox="-14 -13 28 26"><circle cx="1.500" cy="1.900" r="4.700" fill="#5cc37a"/><circle cx="-7" cy="-1.5" r="3.3" fill="#5cc37a"/><circle cx="1.9" cy="-6.6" r="3.2" fill="#6aa5dc"/><circle cx="-4.2" cy="-6.9" r="2" fill="#2f7ed8"/><circle cx="7" cy="-3.2" r="2" fill="#e3ecf5"/><circle cx="-6.4" cy="4.8" r="2.2" fill="#7fb0e0"/><circle cx="8.4" cy="1.4" r="1.1" fill="#5cc37a"/><circle cx="-2.4" cy="8.3" r="1.5" fill="#2f7ed8"/><circle cx="1.3" cy="9" r="0.9" fill="#5cc37a"/><circle cx="4.6" cy="7.8" r="0.9" fill="#3aa05a"/><circle cx="7" cy="5.2" r="1" fill="#4a90d9"/><circle cx="-1.9" cy="-3.2" r="1" fill="#e8f0f5"/></svg><svg class="b" style="left:1013px;top:610px" width="28" height="26" viewBox="-14 -13 28 26"><circle cx="1.500" cy="1.900" r="4.700" fill="#adadad"/><circle cx="-7" cy="-1.5" r="3.3" fill="#b5b5b5"/><circle cx="1.9" cy="-6.6" r="3.2" fill="#a3a3a3"/><circle cx="-4.2" cy="-6.9" r="2" fill="#8c8c8c"/><circle cx="7" cy="-3.2" r="2" fill="#e6e6e6"/><circle cx="-6.4" cy="4.8" r="2.2" fill="#b0b0b0"/><circle cx="8.4" cy="1.4" r="1.1" fill="#c5c5c5"/><circle cx="-2.4" cy="8.3" r="1.5" fill="#6e6e6e"/><circle cx="1.3" cy="9" r="0.9" fill="#c0c0c0"/><circle cx="4.6" cy="7.8" r="0.9" fill="#777"/><circle cx="7" cy="5.2" r="1" fill="#999"/><circle cx="-1.9" cy="-3.2" r="1" fill="#e5e5e5"/></svg><span class="t" style="left:1057.9px;top:588px;font-size:12.5px;line-height:14px;color:#8a8a8a;letter-spacing:-0.416px;">Dark Mode</span><div class="grp" style="left:1058px;top:608px;width:85px;height:30px"></div><div class="b" style="left:1059px;top:609px;width:41.500px;height:28px;background:#eaeaea;border-radius:2px 0 0 2px"></div><div class="b" style="left:1100px;top:609px;width:1px;height:28px;background:#d5d5d5"></div><svg class="b" style="left:1069.450px;top:612.450px" width="20" height="20" viewBox="-10 -10 20 20"><circle r="4.200" fill="#fdb32b"/><path d="M6.10 0.00L8.00 0.00" stroke="#fdb32b" stroke-width="1.1" stroke-linecap="round"/><path d="M4.31 4.31L5.66 5.66" stroke="#fdb32b" stroke-width="1.1" stroke-linecap="round"/><path d="M0.00 6.10L0.00 8.00" stroke="#fdb32b" stroke-width="1.1" stroke-linecap="round"/><path d="M-4.31 4.31L-5.66 5.66" stroke="#fdb32b" stroke-width="1.1" stroke-linecap="round"/><path d="M-6.10 0.00L-8.00 0.00" stroke="#fdb32b" stroke-width="1.1" stroke-linecap="round"/><path d="M-4.31 -4.31L-5.66 -5.66" stroke="#fdb32b" stroke-width="1.1" stroke-linecap="round"/><path d="M-0.00 -6.10L-0.00 -8.00" stroke="#fdb32b" stroke-width="1.1" stroke-linecap="round"/><path d="M4.31 -4.31L5.66 -5.66" stroke="#fdb32b" stroke-width="1.1" stroke-linecap="round"/></svg><svg class="b" style="left:1111.800px;top:613.800px" width="18" height="18" viewBox="0 0 18 18"><path d="M9.500 2.200A6.800 6.800 0 1 0 16 11.800A5.800 5.800 0 0 1 9.500 2.200z" fill="#777"/></svg><div class="b" style="left:1279px;top:696px;width:50px;height:50px;border-radius:50%;background:#1d81a2;box-shadow:0 2px 5px rgba(0,0,0,.18)"></div><svg class="b" style="left:1290px;top:710px" width="28" height="24" viewBox="0 0 28 24"><path d="M3.900 8.600L14.100 3L24.300 9.200L13.800 14.500z" fill="#fff"/><path d="M7.800 12.200V15.600C7.800 17.500 10.500 18.400 13.800 18.400S19.900 17.500 19.900 15.600V12.400L13.800 15.900z" fill="#fff"/><path d="M22 10.500H23.400V18.300L24 18.300L22.700 21L21.400 18.300L22 18.300z" fill="#fff"/></svg></div></body></html>
